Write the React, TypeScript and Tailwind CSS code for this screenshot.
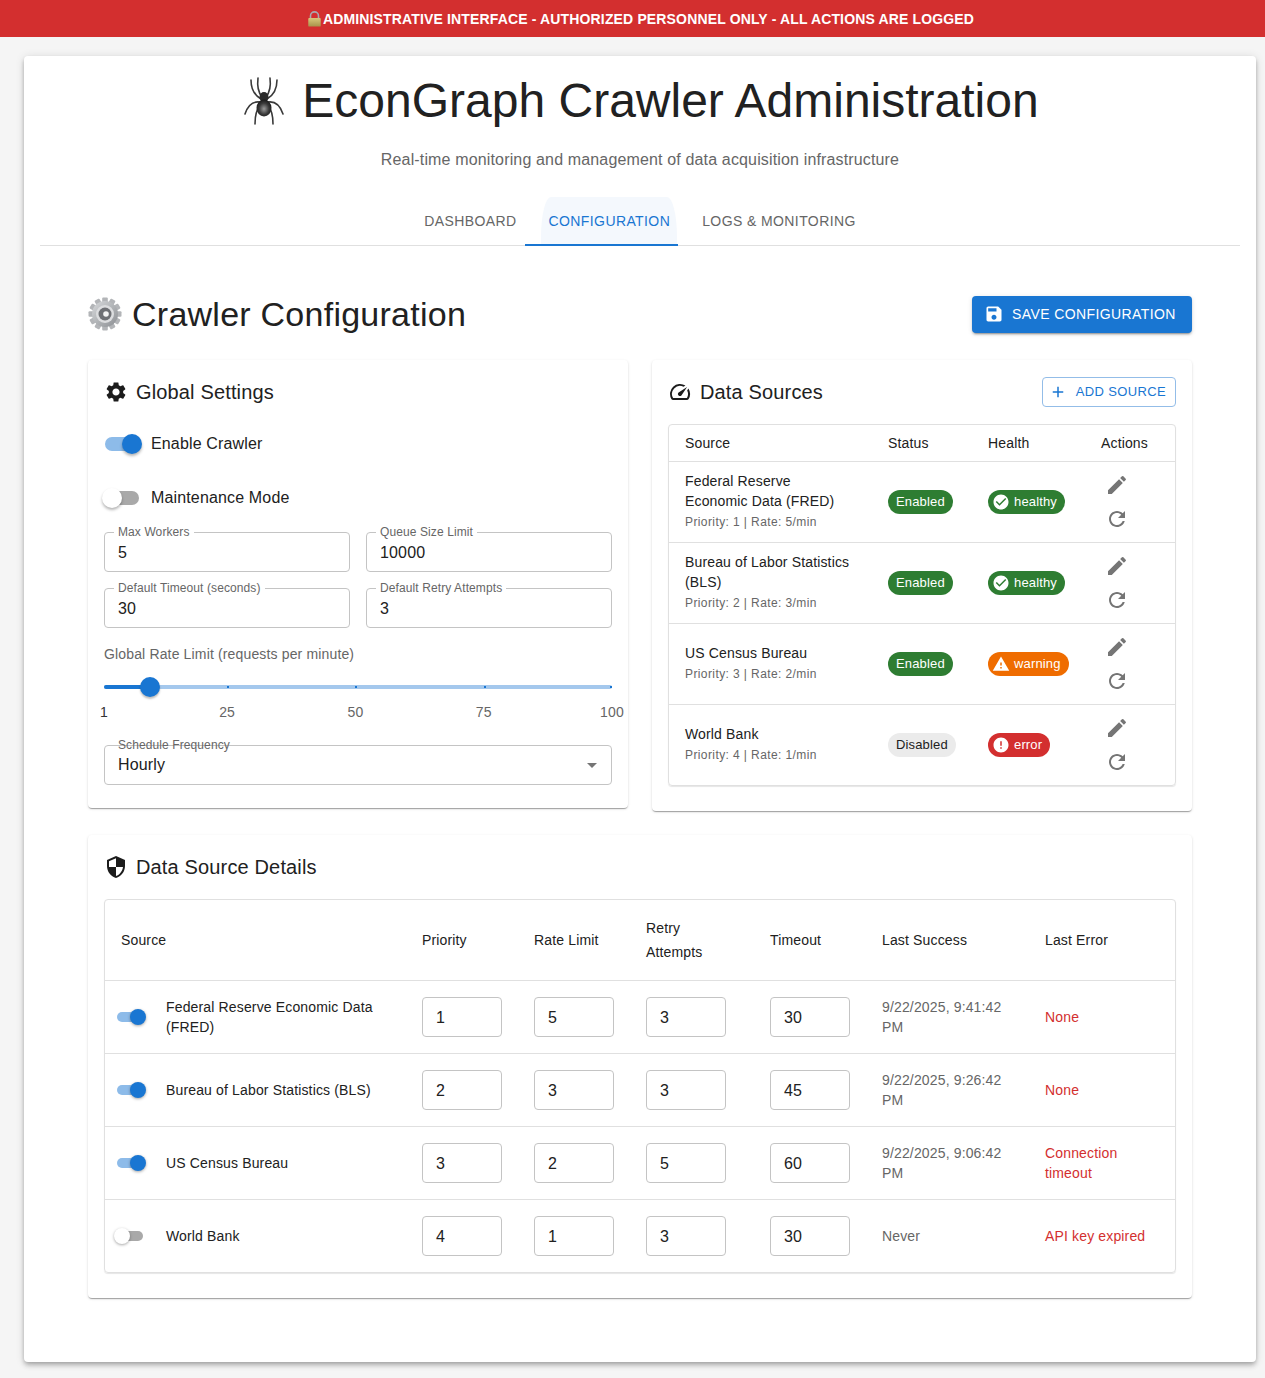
import React from "react";

const sans = "font-['Liberation_Sans',Arial,sans-serif]";

const paths = {
  settings:
    "M19.14 12.94c.04-.3.06-.61.06-.94 0-.32-.02-.64-.07-.94l2.03-1.58c.18-.14.23-.41.12-.61l-1.92-3.32c-.12-.22-.37-.29-.59-.22l-2.39.96c-.5-.38-1.03-.7-1.62-.94l-.36-2.54c-.04-.24-.24-.41-.48-.41h-3.84c-.24 0-.43.17-.47.41l-.36 2.54c-.59.24-1.13.57-1.62.94l-2.39-.96c-.22-.08-.47 0-.59.22L2.74 8.87c-.12.21-.08.47.12.61l2.03 1.58c-.05.3-.09.63-.09.94s.02.64.07.94l-2.03 1.58c-.18.14-.23.41-.12.61l1.92 3.32c.12.22.37.29.59.22l2.39-.96c.5.38 1.03.7 1.62.94l.36 2.54c.05.24.24.41.48.41h3.84c.24 0 .44-.17.47-.41l.36-2.54c.59-.24 1.13-.56 1.62-.94l2.39.96c.22.08.47 0 .59-.22l1.92-3.32c.12-.22.07-.47-.12-.61l-2.01-1.58zM12 15.6c-1.98 0-3.6-1.62-3.6-3.6s1.62-3.6 3.6-3.6 3.6 1.62 3.6 3.6-1.62 3.6-3.6 3.6z",
  speed:
    "m20.38 8.57-1.23 1.85a8 8 0 0 1-.22 7.58H5.07A8 8 0 0 1 15.58 6.85l1.85-1.23A10 10 0 0 0 3.35 19a2 2 0 0 0 1.72 1h13.85a2 2 0 0 0 1.74-1 10 10 0 0 0-.27-10.44zm-9.79 6.84a2 2 0 0 0 2.83 0l5.66-8.49-8.49 5.66a2 2 0 0 0 0 2.83z",
  security:
    "M12 1 3 5v6c0 5.55 3.84 10.74 9 12 5.16-1.26 9-6.45 9-12V5l-9-4zm0 10.99h7c-.53 4.12-3.28 7.79-7 8.94V12H5V6.3l7-3.11v8.8z",
  edit: "M3 17.25V21h3.75L17.81 9.94l-3.75-3.75L3 17.25zM20.71 7.04c.39-.39.39-1.02 0-1.41l-2.34-2.34a.9959.9959 0 0 0-1.41 0l-1.83 1.83 3.75 3.75 1.83-1.83z",
  refresh:
    "M17.65 6.35C16.2 4.9 14.21 4 12 4c-4.42 0-7.99 3.58-7.99 8s3.57 8 7.99 8c3.73 0 6.84-2.55 7.73-6h-2.08c-.82 2.33-3.04 4-5.65 4-3.31 0-6-2.69-6-6s2.69-6 6-6c1.66 0 3.14.69 4.22 1.78L13 11h7V4l-2.35 2.35z",
  check:
    "M12 2C6.48 2 2 6.48 2 12s4.48 10 10 10 10-4.48 10-10S17.52 2 12 2zm-2 15-5-5 1.41-1.41L10 14.17l7.59-7.59L19 8l-9 9z",
  warning: "M1 21h22L12 2 1 21zm12-3h-2v-2h2v2zm0-4h-2v-4h2v4z",
  error:
    "M12 2C6.48 2 2 6.48 2 12s4.48 10 10 10 10-4.48 10-10S17.52 2 12 2zm1 15h-2v-2h2v2zm0-4h-2V7h2v6z",
  save: "M17 3H5c-1.11 0-2 .9-2 2v14c0 1.1.89 2 2 2h14c1.1 0 2-.9 2-2V7l-4-4zm-5 16c-1.66 0-3-1.34-3-3s1.34-3 3-3 3 1.34 3 3-1.34 3-3 3zm3-10H5V5h10v4z",
  add: "M19 13h-6v6h-2v-6H5v-2h6V5h2v6h6v2z",
  drop: "m7 10 5 5 5-5z",
};

function Icon({ name, className }: { name: keyof typeof paths; className: string }) {
  return (
    <svg viewBox="0 0 24 24" className={className} fill="currentColor">
      <path d={paths[name]} />
    </svg>
  );
}

function LockEmoji() {
  return (
    <svg viewBox="0 0 16 18" className="h-[16px] w-[15px] shrink-0">
      <defs>
        <linearGradient id="lockBody" x1="0" y1="0" x2="0" y2="1">
          <stop offset="0" stopColor="#d8c77a" />
          <stop offset="1" stopColor="#a8934a" />
        </linearGradient>
      </defs>
      <path d="M3.5 9V5.5a4.5 4.5 0 0 1 9 0V9" fill="none" stroke="#a9a9ad" strokeWidth="1.8" />
      <rect x="1" y="8" width="14" height="9.5" rx="1" fill="url(#lockBody)" />
    </svg>
  );
}

function SpiderEmoji() {
  const legs = [
    "M18 20 C14 15 13 9 14 1",
    "M17 22 C10 18 7 12 7 3",
    "M16 25 C9 24 4 28 1 37",
    "M16 29 C12 33 11 39 11 47",
    "M22 20 C26 15 27 9 26 1",
    "M23 22 C30 18 33 12 33 3",
    "M24 25 C31 24 36 28 39 37",
    "M24 29 C28 33 29 39 29 47",
  ];
  return (
    <svg viewBox="0 0 40 48" className="h-[48px] w-[40px] shrink-0">
      <defs>
        <radialGradient id="spiderBody" cx="0.5" cy="0.55" r="0.6">
          <stop offset="0" stopColor="#9a9a9a" />
          <stop offset="0.55" stopColor="#3a3a3a" />
          <stop offset="1" stopColor="#111" />
        </radialGradient>
      </defs>
      {legs.map((d) => (
        <path key={d} d={d} fill="none" stroke="#3a3a3a" strokeWidth="1.6" strokeLinecap="round" />
      ))}
      <ellipse cx="20" cy="20" rx="4.5" ry="5" fill="#2a2a2a" />
      <ellipse cx="20" cy="31" rx="7.5" ry="8.5" fill="url(#spiderBody)" />
    </svg>
  );
}

function GearEmoji() {
  const teeth = Array.from({ length: 12 }, (_, i) => i * 30);
  return (
    <svg viewBox="0 0 34 34" className="h-[34px] w-[34px] shrink-0">
      <defs>
        <linearGradient id="gearBody" x1="0" y1="0" x2="1" y2="1">
          <stop offset="0" stopColor="#d8dadc" />
          <stop offset="1" stopColor="#8b8e92" />
        </linearGradient>
      </defs>
      {teeth.map((a) => (
        <rect key={a} x="14.2" y="0.5" width="5.6" height="6" rx="1" fill="#b3b5b8" transform={`rotate(${a} 17 17)`} />
      ))}
      <circle cx="17" cy="17" r="13" fill="url(#gearBody)" />
      <circle cx="17" cy="17" r="9" fill="#dcdddf" />
      <circle cx="17" cy="17" r="6.5" fill="#6f7175" />
      <circle cx="18" cy="17" r="2.8" fill="#f4f4f4" />
    </svg>
  );
}

function Switch({ on, small }: { on: boolean; small?: boolean }) {
  if (small) {
    return (
      <div className="relative h-[16px] w-[26px] shrink-0">
        <div className={`absolute inset-x-0 top-[3px] h-[10px] rounded-full ${on ? "bg-[#8dbbe9]" : "bg-[#a9a9a9]"}`} />
        <div
          className={`absolute top-0 h-[16px] w-[16px] rounded-full shadow-[0_1px_3px_rgba(0,0,0,0.35)] ${
            on ? "left-[13px] bg-[#1976d2]" : "left-[-3px] bg-white"
          }`}
        />
      </div>
    );
  }
  return (
    <div className="relative h-[20px] w-[34px] shrink-0">
      <div className={`absolute inset-x-0 top-[3px] h-[14px] rounded-full ${on ? "bg-[#8dbbe9]" : "bg-[#a9a9a9]"}`} />
      <div
        className={`absolute top-0 h-[20px] w-[20px] rounded-full shadow-[0_2px_3px_rgba(0,0,0,0.3)] ${
          on ? "left-[17px] bg-[#1976d2]" : "left-[-3px] bg-white"
        }`}
      />
    </div>
  );
}

function Field({ label, value }: { label: string; value: string }) {
  return (
    <div className="relative h-[40px] rounded border border-[#c4c4c4] px-[13px] text-[16px] leading-[40px] tracking-[0.15px] text-[#212121]">
      {value}
      <span className="absolute left-[9px] top-[-8px] bg-white px-[4px] text-[12px] leading-[14px] tracking-[0.1px] text-[#666]">
        {label}
      </span>
    </div>
  );
}

function Card({ children, className = "" }: { children: React.ReactNode; className?: string }) {
  return (
    <div className={`rounded bg-white shadow-[0_2px_1px_-1px_rgba(0,0,0,0.2),0_1px_1px_0_rgba(0,0,0,0.14),0_1px_3px_0_rgba(0,0,0,0.12)] ${className}`}>
      {children}
    </div>
  );
}

function CardTitle({ icon, title }: { icon: keyof typeof paths; title: string }) {
  return (
    <div className="flex items-center gap-[8px] text-[#212121]">
      <Icon name={icon} className="h-[24px] w-[24px] text-[#1c1c1c]" />
      <span className="text-[20px] leading-[32px] tracking-[0.15px]">{title}</span>
    </div>
  );
}

function Chip({ label, tone, icon }: { label: string; tone: string; icon?: keyof typeof paths }) {
  return (
    <span className={`inline-flex h-[24px] items-center rounded-full text-[13px] tracking-[0.15px] ${tone} ${icon ? "pl-[4px] pr-[8px]" : "px-[8px]"}`}>
      {icon && <Icon name={icon} className="mr-[4px] h-[18px] w-[18px] text-white" />}
      {label}
    </span>
  );
}

const green = "bg-[#2e7d32] text-white";
const orange = "bg-[#ef6c00] text-white";
const red = "bg-[#d32f2f] text-white";
const grey = "bg-[#ebebeb] text-[#212121]";

const sources = [
  { name: ["Federal Reserve", "Economic Data (FRED)"], meta: "Priority: 1 | Rate: 5/min", status: "Enabled", health: "healthy", tone: green, icon: "check" as const },
  { name: ["Bureau of Labor Statistics", "(BLS)"], meta: "Priority: 2 | Rate: 3/min", status: "Enabled", health: "healthy", tone: green, icon: "check" as const },
  { name: ["US Census Bureau"], meta: "Priority: 3 | Rate: 2/min", status: "Enabled", health: "warning", tone: orange, icon: "warning" as const },
  { name: ["World Bank"], meta: "Priority: 4 | Rate: 1/min", status: "Disabled", health: "error", tone: red, icon: "error" as const },
];

const details = [
  { on: true, name: "Federal Reserve Economic Data (FRED)", vals: ["1", "5", "3", "30"], success: "9/22/2025, 9:41:42 PM", err: "None" },
  { on: true, name: "Bureau of Labor Statistics (BLS)", vals: ["2", "3", "3", "45"], success: "9/22/2025, 9:26:42 PM", err: "None" },
  { on: true, name: "US Census Bureau", vals: ["3", "2", "5", "60"], success: "9/22/2025, 9:06:42 PM", err: "Connection timeout" },
  { on: false, name: "World Bank", vals: ["4", "1", "3", "30"], success: "Never", err: "API key expired" },
];

const detailCols = "grid grid-cols-[301px_112px_112px_124px_112px_163px_1fr] items-center";
const sourceCols = "grid grid-cols-[203px_100px_113px_1fr] items-center";

function GlobalSettings() {
  return (
    <Card className="h-[448px] px-[16px] pt-[16px]">
      <CardTitle icon="settings" title="Global Settings" />
      <div className="mt-[17px] flex h-[38px] items-center gap-[12px] pl-px text-[16px] tracking-[0.15px] text-[#212121]">
        <Switch on />
        <span>Enable Crawler</span>
      </div>
      <div className="mt-[16px] flex h-[38px] items-center gap-[12px] pl-px text-[16px] tracking-[0.15px] text-[#212121]">
        <Switch on={false} />
        <span>Maintenance Mode</span>
      </div>
      <div className="mt-[15px] grid grid-cols-2 gap-x-[16px] gap-y-[16px]">
        <Field label="Max Workers" value="5" />
        <Field label="Queue Size Limit" value="10000" />
        <Field label="Default Timeout (seconds)" value="30" />
        <Field label="Default Retry Attempts" value="3" />
      </div>
      <div className="mt-[16px] text-[14px] leading-[20px] tracking-[0.15px] text-[#666]">
        Global Rate Limit (requests per minute)
      </div>
      <div className="relative mt-[21px] h-[4px] rounded-full bg-[#a4c8ed]">
        <div className="absolute left-0 top-0 h-[4px] w-[9.09%] rounded-full bg-[#1976d2]" />
        <div className="absolute left-[24.24%] top-[1px] h-[2px] w-[2px] bg-[#1976d2]" />
        <div className="absolute left-[49.49%] top-[1px] h-[2px] w-[2px] bg-[#1976d2]" />
        <div className="absolute left-[74.75%] top-[1px] h-[2px] w-[2px] bg-[#1976d2]" />
        <div className="absolute right-0 top-[1px] h-[2px] w-[2px] bg-[#1976d2]" />
        <div className="absolute left-[36px] top-[-8px] h-[20px] w-[20px] rounded-full bg-[#1976d2] shadow-[0_2px_2px_rgba(0,0,0,0.25)]" />
      </div>
      <div className="relative mt-[13px] h-[20px] text-[14px] leading-[20px] tracking-[0.15px] text-[#666]">
        <span className="absolute left-[-4px] text-[#333]">1</span>
        <span className="absolute left-[24.24%] -translate-x-1/2">25</span>
        <span className="absolute left-[49.49%] -translate-x-1/2">50</span>
        <span className="absolute left-[74.75%] -translate-x-1/2">75</span>
        <span className="absolute left-full -translate-x-1/2">100</span>
      </div>
      <div className="relative mt-[23px] flex h-[40px] items-center justify-between rounded border border-[#c4c4c4] pl-[13px] pr-[7px] text-[16px] tracking-[0.15px] text-[#212121]">
        <span>Hourly</span>
        <Icon name="drop" className="h-[24px] w-[24px] text-[#757575]" />
        <span className="absolute left-[13px] top-[-8px] text-[12px] leading-[14px] tracking-[0.1px] text-[#666]">
          Schedule Frequency
        </span>
      </div>
    </Card>
  );
}

function DataSources() {
  return (
    <Card className="px-[16px] pb-[25px] pt-[16px]">
      <div className="flex items-center justify-between">
        <CardTitle icon="speed" title="Data Sources" />
        <button className="flex h-[30px] items-center rounded border border-[#93bde8] pl-[6px] pr-[9px] text-[13px] tracking-[0.35px] text-[#1976d2]">
          <Icon name="add" className="mr-[9px] h-[18px] w-[18px]" />
          ADD SOURCE
        </button>
      </div>
      <div className="mt-[16px] rounded border border-[#e0e0e0] shadow-[0_1px_1px_rgba(0,0,0,0.1)]">
        <div className={`${sourceCols} h-[37px] border-b border-[#e0e0e0] text-[14px] tracking-[0.15px] text-[#212121]`}>
          <div className="pl-[16px]">Source</div>
          <div className="pl-[16px]">Status</div>
          <div className="pl-[16px]">Health</div>
          <div className="pl-[16px]">Actions</div>
        </div>
        {sources.map((s, i) => (
          <div key={s.meta} className={`${sourceCols} ${i < 3 ? "h-[81px] border-b border-[#e0e0e0]" : "h-[80px]"}`}>
            <div className="pb-[2px] pl-[16px]">
              {s.name.map((line) => (
                <div key={line} className="text-[14px] leading-[20px] tracking-[0.15px] text-[#212121]">
                  {line}
                </div>
              ))}
              <div className="mt-[2px] text-[12px] leading-[18px] tracking-[0.4px] text-[#666]">{s.meta}</div>
            </div>
            <div className="flex pl-[16px]">
              <Chip label={s.status} tone={s.status === "Enabled" ? green : grey} />
            </div>
            <div className="flex pl-[16px]">
              <Chip label={s.health} tone={s.tone} icon={s.icon} />
            </div>
            <div className="flex flex-col gap-[10px] pl-[20px] text-[#757575]">
              <Icon name="edit" className="h-[24px] w-[24px]" />
              <Icon name="refresh" className="h-[24px] w-[24px]" />
            </div>
          </div>
        ))}
      </div>
    </Card>
  );
}

function SourceDetails() {
  return (
    <Card className="mt-[24px] px-[16px] pb-[25px] pt-[16px]">
      <CardTitle icon="security" title="Data Source Details" />
      <div className="mt-[16px] rounded border border-[#e0e0e0] shadow-[0_1px_1px_rgba(0,0,0,0.1)]">
        <div className={`${detailCols} h-[81px] border-b border-[#e0e0e0] text-[14px] tracking-[0.15px] text-[#212121]`}>
          <div className="pl-[16px]">Source</div>
          <div className="pl-[16px]">Priority</div>
          <div className="pl-[16px]">Rate Limit</div>
          <div className="w-[80px] pl-[16px] leading-[24px]">Retry Attempts</div>
          <div className="pl-[16px]">Timeout</div>
          <div className="pl-[16px]">Last Success</div>
          <div className="pl-[16px]">Last Error</div>
        </div>
        {details.map((d, i) => (
          <div key={d.name} className={`${detailCols} ${i < 3 ? "h-[73px] border-b border-[#e0e0e0]" : "h-[72px]"}`}>
            <div className="flex items-center gap-[23px] pl-[12px] pr-[16px] text-[14px] leading-[20px] tracking-[0.15px] text-[#212121]">
              <Switch on={d.on} small />
              <span>{d.name}</span>
            </div>
            {d.vals.map((v, j) => (
              <div key={j} className="pl-[16px]">
                <div className="h-[40px] w-[80px] rounded border border-[#c4c4c4] pl-[13px] text-[16px] leading-[40px] tracking-[0.15px] text-[#212121]">
                  {v}
                </div>
              </div>
            ))}
            <div className="pl-[16px] pr-[16px] text-[14px] leading-[20px] tracking-[0.15px] text-[#666]">{d.success}</div>
            <div className="pl-[16px] pr-[16px] text-[14px] leading-[20px] tracking-[0.15px] text-[#d32f2f]">{d.err}</div>
          </div>
        ))}
      </div>
    </Card>
  );
}

export default function App() {
  return (
    <div className={`${sans} min-h-[1378px] bg-[#f5f5f5]`}>
      <div className="flex h-[37px] items-center justify-center gap-px bg-[#d32f2f] pl-[16px] pt-px text-[14px] font-bold tracking-[0.15px] text-white">
        <LockEmoji />
        <span>ADMINISTRATIVE INTERFACE - AUTHORIZED PERSONNEL ONLY - ALL ACTIONS ARE LOGGED</span>
      </div>

      <main className="ml-[24px] mr-[9px] mt-[19px] h-[1306px] rounded bg-white px-[16px] pt-[16px] shadow-[0_2px_4px_-1px_rgba(0,0,0,0.2),0_4px_5px_0_rgba(0,0,0,0.14),0_1px_10px_0_rgba(0,0,0,0.12)]">
        <h1 className="flex h-[56px] items-center justify-center gap-[18px] pl-[3px] pt-[2px] text-[48px] text-[#212121]">
          <SpiderEmoji />
          <span>EconGraph Crawler Administration</span>
        </h1>
        <p className="mt-[20px] text-center text-[16px] leading-[24px] tracking-[0.15px] text-[#666]">
          Real-time monitoring and management of data acquisition infrastructure
        </p>

        <nav className="mt-[25px] flex h-[49px] justify-center border-b border-[#e0e0e0] text-[14px] tracking-[0.4px] text-[#666]">
          <div className="flex h-[48px] items-center px-[16px]">DASHBOARD</div>
          <div className="relative flex h-[48px] items-center px-[16px] text-[#1976d2]">
            <div className="absolute bottom-0 left-[8px] right-[9px] top-0 rounded-[10px_10px_0_0/40px_40px_0_0] bg-[#f4f8fd]" />
            <span className="relative">CONFIGURATION</span>
            <div className="absolute bottom-[-1px] left-[-8px] h-[2px] w-[153px] bg-[#1976d2]" />
          </div>
          <div className="flex h-[48px] items-center px-[16px]">LOGS &amp; MONITORING</div>
        </nav>

        <section className="px-[48px] pt-[49px]">
          <div className="flex h-[38px] items-center justify-between">
            <h2 className="flex items-center gap-[10px] text-[34px] tracking-[0.25px] text-[#212121]">
              <GearEmoji />
              <span>Crawler Configuration</span>
            </h2>
            <button className="flex h-[37px] w-[220px] items-center rounded bg-[#1976d2] pl-[12px] text-[14px] tracking-[0.4px] text-white shadow-[0_3px_1px_-2px_rgba(0,0,0,0.2),0_2px_2px_0_rgba(0,0,0,0.14),0_1px_5px_0_rgba(0,0,0,0.12)]">
              <Icon name="save" className="mr-[8px] h-[20px] w-[20px]" />
              SAVE CONFIGURATION
            </button>
          </div>
          <div className="mt-[27px] grid grid-cols-2 items-start gap-[24px]">
            <GlobalSettings />
            <DataSources />
          </div>
          <SourceDetails />
        </section>
      </main>
    </div>
  );
}
